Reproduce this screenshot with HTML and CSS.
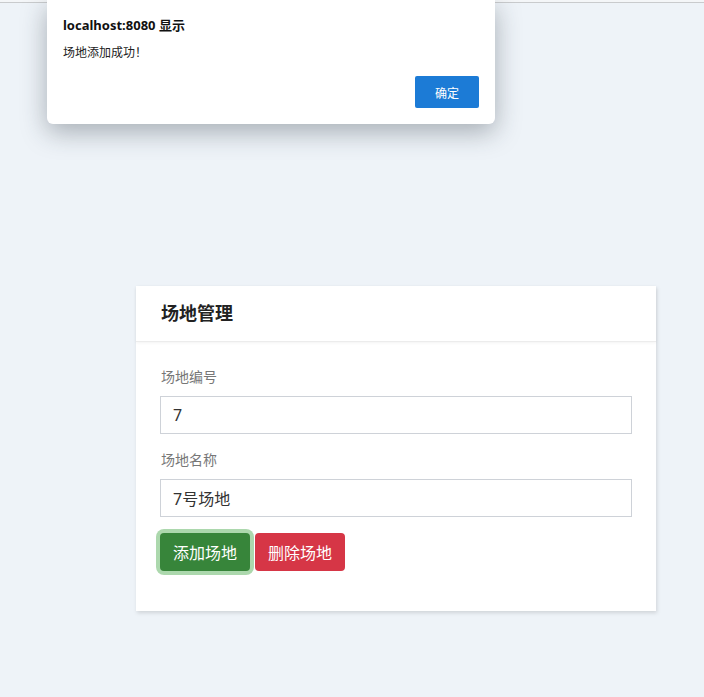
FILE: index.html
```html
<!DOCTYPE html>
<html lang="zh-CN">
<head>
<meta charset="utf-8">
<title>场地管理</title>
<link rel="stylesheet" href="styles.css">
</head>
<body>
<div class="topline"></div>
<main class="page">
  <section class="card">
    <header class="card-header">场地管理</header>
    <div class="card-body">
      <label class="field-label">场地编号</label>
      <input class="field-input" type="text" value="7">
      <label class="field-label">场地名称</label>
      <input class="field-input" type="text" value="7号场地">
      <div class="actions">
        <button class="btn btn-add">添加场地</button>
        <button class="btn btn-del">删除场地</button>
      </div>
    </div>
  </section>
</main>
<div class="dialog">
  <div class="dialog-title">localhost:8080 显示</div>
  <div class="dialog-msg">场地添加成功！</div>
  <div class="dialog-actions">
    <button class="dialog-btn">确定</button>
  </div>
</div>
</body>
</html>
```
FILE: styles.css
```css
* { box-sizing: border-box; }
html, body { margin: 0; padding: 0; }
body {
  background: #eef3f8;
  font-family: "Noto Sans", "Noto Sans CJK SC", sans-serif;
  min-height: 697px;
}
.topline {
  height: 3px;
  background: #f4f6f8;
  border-bottom: 1px solid #c9cbcd;
}
.page {
  padding-top: 283px;
  padding-left: 136px;
}
.card {
  width: 520px;
  background: #fff;
  box-shadow: 1px 2px 4px rgba(0, 0, 0, 0.13);
}
.card-header {
  height: 56px;
  padding-left: 25px;
  padding-bottom: 3px;
  display: flex;
  align-items: center;
  font-family: "Noto Sans CJK SC", sans-serif;
  font-size: 18px;
  font-weight: 700;
  color: #222;
  border-bottom: 1px solid #ececec;
  box-shadow: 0 1px 3px rgba(0, 0, 0, 0.05);
}
.card-body {
  padding: 24px 24px 40px 24px;
  display: flex;
  flex-direction: column;
}
.field-label {
  font-family: "Noto Sans CJK SC", sans-serif;
  font-size: 14px;
  line-height: 20px;
  color: #777;
  margin-left: 1px;
  margin-bottom: 10px;
}
.field-input {
  height: 38px;
  width: 472px;
  border: 1px solid #ced2d8;
  border-radius: 0;
  padding: 0 12px;
  font-family: "Noto Sans", "Noto Sans CJK SC", sans-serif;
  font-size: 16px;
  color: #333;
  margin-bottom: 15px;
  outline: none;
}
.actions {
  display: flex;
  gap: 5px;
  margin-top: 1px;
}
.btn {
  height: 38px;
  width: 90px;
  border: none;
  border-radius: 4px;
  font-family: "Noto Sans CJK SC", sans-serif;
  font-size: 16px;
  color: #fff;
  padding: 0;
}
.btn-add {
  background: #37853a;
  box-shadow: 0 0 0 4px #acd8ad;
}
.btn-del {
  background: #d63646;
}
.dialog {
  position: absolute;
  left: 47px;
  top: 0;
  width: 448px;
  height: 124px;
  background: #fff;
  border-radius: 0 0 6px 6px;
  box-shadow: 0 8px 26px rgba(40, 50, 60, 0.36);
  padding: 16px 16px 0 16px;
}
.dialog-title {
  font-family: "Noto Sans", "Noto Sans CJK SC", sans-serif;
  font-size: 13px;
  font-weight: 700;
  color: #111;
  line-height: 18px;
}
.dialog-msg {
  margin-top: 9px;
  font-family: "Noto Sans CJK SC", sans-serif;
  font-size: 12px;
  color: #222;
  line-height: 18px;
}
.dialog-actions {
  display: flex;
  justify-content: flex-end;
  margin-top: 15px;
}
.dialog-btn {
  width: 64px;
  height: 32px;
  border: none;
  border-radius: 2px;
  background: #1c7bd6;
  color: #fff;
  font-family: "Noto Sans CJK SC", sans-serif;
  font-size: 12px;
  padding: 0;
}
```
